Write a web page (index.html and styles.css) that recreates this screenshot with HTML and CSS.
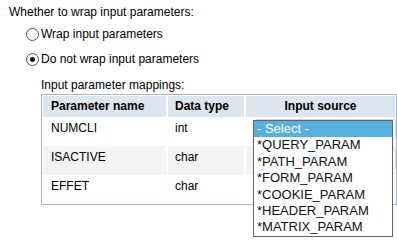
FILE: index.html
```html
<!DOCTYPE html>
<html lang="en">
<head>
  <meta charset="UTF-8">
  <title>Input parameters</title>
  <link rel="stylesheet" href="styles.css">
</head>
<body>
  <div class="title">Whether to wrap input parameters:</div>

  <div class="options">
    <div class="option"><span class="radio"></span>Wrap input parameters</div>
    <div class="option"><span class="radio checked"></span>Do not wrap input parameters</div>
  </div>

  <div class="mappings">
    <div class="label">Input parameter mappings:</div>
    <div class="table-wrap">
      <table class="params">
        <colgroup>
          <col class="col-name">
          <col class="col-type">
          <col class="col-source">
        </colgroup>
        <thead>
          <tr>
            <th>Parameter name</th>
            <th>Data type</th>
            <th class="center">Input source</th>
          </tr>
        </thead>
        <tbody>
          <tr>
            <td>NUMCLI</td>
            <td>int</td>
            <td><div class="select"></div></td>
          </tr>
          <tr class="alt">
            <td>ISACTIVE</td>
            <td>char</td>
            <td><div class="select"></div></td>
          </tr>
          <tr>
            <td>EFFET</td>
            <td>char</td>
            <td></td>
          </tr>
        </tbody>
      </table>

      <ul class="dropdown">
        <li class="selected">- Select -</li>
        <li>*QUERY_PARAM</li>
        <li>*PATH_PARAM</li>
        <li>*FORM_PARAM</li>
        <li>*COOKIE_PARAM</li>
        <li>*HEADER_PARAM</li>
        <li>*MATRIX_PARAM</li>
      </ul>
    </div>
  </div>
</body>
</html>
```

FILE: styles.css
```css
html, body {
  min-height: 245px;
}
body {
  margin: 0;
  font-family: "Liberation Sans", Arial, sans-serif;
  font-size: 12px;
  line-height: 14px;
  color: #000;
  background: #fff;
}
.title {
  padding: 5px 0 0 9px;
}
.options {
  margin: 8px 0 0 26px;
  display: flex;
  flex-direction: column;
  gap: 11px;
}
.option {
  display: flex;
  align-items: center;
}
.radio {
  width: 11px;
  height: 11px;
  border: 1px solid #555;
  border-radius: 50%;
  margin-right: 2px;
  background: #fff;
  display: flex;
  align-items: center;
  justify-content: center;
}
.radio.checked::after {
  content: "";
  width: 5px;
  height: 5px;
  border-radius: 50%;
  background: #111;
}
.mappings {
  margin: 12px 0 0 41px;
}
.label {
  margin-bottom: 2px;
}
.table-wrap {
  position: relative;
  padding-bottom: 36px;
}
.params {
  width: 356px;
  table-layout: fixed;
  border-collapse: separate;
  border-spacing: 0;
  border: 1px solid #a8b7c7;
  padding: 1px 1px 0 1px;
}
.col-name { width: 123px; }
.col-type { width: 78px; }
.params th {
  background: #dde5ee;
  font-weight: bold;
  text-align: left;
  padding: 3px 8px 4px;
  height: 14px;
}
.params td {
  padding: 4px 8px 0;
  height: 25px;
  vertical-align: top;
}
.params th + th,
.params td + td {
  border-left: 2px solid #fff;
  padding-left: 7px;
}
.params th.center {
  text-align: center;
  padding-left: 0;
  padding-right: 0;
}
.params tr.alt td {
  background: #f3f3f3;
}
.select {
  width: 140px;
  height: 19px;
  margin: -2px 0 0 1px;
  border: 1px solid #d6d6d6;
  border-radius: 3px;
  background: #fff;
}
.dropdown {
  position: absolute;
  left: 212px;
  top: 26px;
  width: 138px;
  margin: 0;
  padding: 0;
  list-style: none;
  border: 1px solid #646464;
  background: #fff;
  font-size: 13px;
  line-height: 16.4px;
  color: #111;
}
.dropdown li {
  padding-left: 3px;
}
.dropdown li.selected {
  background: #56b0e0;
  color: #fff;
}
```
